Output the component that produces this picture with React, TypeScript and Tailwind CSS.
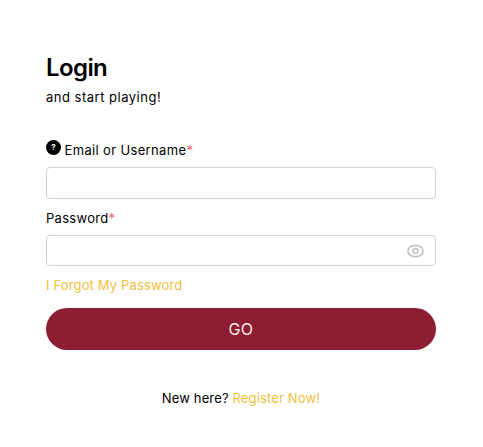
import { useState } from 'react'

function EyeIcon() {
  return (
    <svg className="w-[17px] h-[14px]" viewBox="0 0 17 14" fill="none" stroke="#c4c4c4">
      <ellipse cx="8.500" cy="7" rx="7.600" ry="5.700" strokeWidth={1.7} />
      <circle cx="8.500" cy="7" r="2.500" strokeWidth={1.600} />
    </svg>
  )
}

export default function App() {
  const [email, setEmail] = useState('')
  const [password, setPassword] = useState('')

  return (
    <div className="w-[483px] h-[447px] bg-white pl-[46px] pt-[52px] font-['Inter',sans-serif] text-black overflow-hidden">
      <div className="w-[390px]">
        <h1 className="text-[24px] leading-[32px] font-semibold tracking-[-0.6px]">Login</h1>
        <p className="text-[13px] leading-[20px] mt-[3px] tracking-[0.5px]">and start playing!</p>

        <form className="mt-[33px]" onSubmit={e => e.preventDefault()}>
          <div className="flex items-start h-[20px]">
            <span className="w-[15px] h-[15px] rounded-full bg-black text-white text-[8px] leading-[15px] font-bold text-center">?</span>
            <label className="text-[13px] leading-[20px] ml-[3.500px] tracking-[0.35px]">
              Email or Username<span className="text-[#f0656f]">*</span>
            </label>
          </div>
          <input
            value={email}
            onChange={e => setEmail(e.target.value)}
            className="block w-full h-[32px] mt-[7px] rounded-[4px] border border-[#d0d0d0] outline-none px-3 text-[13px]"
          />

          <label className="block text-[13px] leading-[20px] mt-[9px] tracking-[0.3px]">
            Password<span className="text-[#f0656f]">*</span>
          </label>
          <div className="flex items-center h-[31px] mt-[7px] rounded-[4px] border border-[#d0d0d0] pl-3 pr-[11px]">
            <input
              type="password"
              value={password}
              onChange={e => setPassword(e.target.value)}
              className="flex-1 min-w-0 outline-none text-[13px]"
            />
            <EyeIcon />
          </div>

          <a href="#" className="block text-[13px] leading-[20px] mt-[9px] text-[#f0bf3d] tracking-[0.15px]">I Forgot My Password</a>

          <button type="submit" className="block w-full h-[42px] mt-[13px] rounded-[21px] bg-[#8c1d33] text-[#fbeee0] text-[16px] tracking-[0.5px]">
            GO
          </button>
        </form>

        <p className="text-[13px] leading-[20px] mt-[38px] text-center tracking-[0.15px]">
          New here? <a href="#" className="text-[#f0bf3d]">Register Now!</a>
        </p>
      </div>
    </div>
  )
}
